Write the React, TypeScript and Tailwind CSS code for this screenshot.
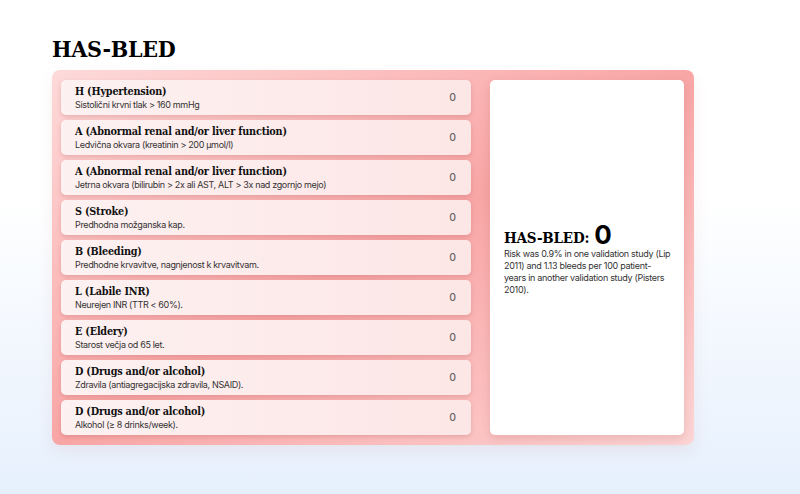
const rows = [
  { title: "H (Hypertension)", desc: "Sistolični krvni tlak > 160 mmHg" },
  { title: "A (Abnormal renal and/or liver function)", desc: "Ledvična okvara (kreatinin > 200 µmol/l)" },
  { title: "A (Abnormal renal and/or liver function)", desc: "Jetrna okvara (bilirubin > 2x ali AST, ALT > 3x nad zgornjo mejo)" },
  { title: "S (Stroke)", desc: "Predhodna možganska kap." },
  { title: "B (Bleeding)", desc: "Predhodne krvavitve, nagnjenost k krvavitvam." },
  { title: "L (Labile INR)", desc: "Neurejen INR (TTR < 60%)." },
  { title: "E (Eldery)", desc: "Starost večja od 65 let." },
  { title: "D (Drugs and/or alcohol)", desc: "Zdravila (antiagregacijska zdravila, NSAID)." },
  { title: "D (Drugs and/or alcohol)", desc: "Alkohol (≥ 8 drinks/week)." },
]

const slab = "font-['DejaVu_Serif_Condensed','DejaVu_Serif',serif]"

export default function App() {
  return (
    <div className="min-h-[494px] w-full bg-linear-to-b from-white from-40% to-[#e6f0fd] font-['Inter',sans-serif] text-[#111]">
      <div className="px-[52px] pt-[35px] pr-[106px]">
        <h1 className={`${slab} text-[23px] font-bold leading-[28px] tracking-[-0.3px] text-black`}>
          HAS-BLED
        </h1>

        <div className="mt-[7px] flex gap-[19px] rounded-[8px] bg-linear-to-br from-[#fddada] via-[#f8a5a5] to-[#fcd5d5] p-[10px] pl-[9px] shadow-[0_6px_14px_rgba(200,150,150,0.15)]">
          <div className="flex w-[410px] shrink-0 flex-col gap-[5px]">
            {rows.map((row, i) => (
              <div
                key={i}
                className="flex h-[35px] items-center justify-between rounded-[5px] bg-linear-to-r from-[#fdf1f1] to-[#fde6e6] pl-[14px] pr-[15px] shadow-[0_2px_4px_rgba(170,80,80,0.25)]"
              >
                <div className="flex flex-col">
                  <span className={`${slab} text-[10.75px] font-bold leading-[14px] tracking-[-0.2px] text-[#111]`}>
                    {row.title}
                  </span>
                  <span className="text-[9px] leading-[12px] tracking-[-0.35px] text-[#333]">{row.desc}</span>
                </div>
                <span className="text-[10.5px] font-medium text-[#666]">0</span>
              </div>
            ))}
          </div>

          <div className="flex min-w-0 flex-1 flex-col justify-center rounded-[5px] bg-white px-[14px] pt-[4px] shadow-[0_4px_10px_rgba(170,80,80,0.2)]">
            <div className="flex items-end gap-[5px]">
              <span className={`${slab} text-[15px] font-bold leading-[18px] tracking-[-0.2px] text-black`}>HAS-BLED:</span>
              <span className="text-[26px] font-bold leading-[24px] text-black">0</span>
            </div>
            <p className="mt-[1px] whitespace-nowrap text-[9px] leading-[12px] tracking-[-0.3px] text-[#333]">
              Risk was 0.9% in one validation study (Lip
              <br />
              2011) and 1.13 bleeds per 100 patient-
              <br />
              years in another validation study (Pisters
              <br />
              2010).
            </p>
          </div>
        </div>
      </div>
    </div>
  )
}
